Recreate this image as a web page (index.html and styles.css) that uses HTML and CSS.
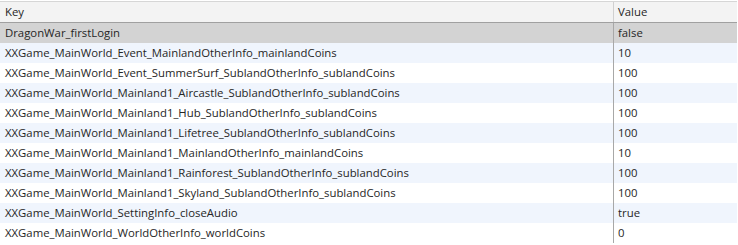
FILE: index.html
```html
<!DOCTYPE html>
<html>
<head>
<meta charset="utf-8">
<link rel="stylesheet" href="styles.css">
</head>
<body>
<div class="grid">
  <div class="row head"><div class="k">Key</div><div class="v">Value</div></div>
  <div class="row sel"><div class="k">DragonWar_firstLogin</div><div class="v">false</div></div>
  <div class="row alt"><div class="k">XXGame_MainWorld_Event_MainlandOtherInfo_mainlandCoins</div><div class="v">10</div></div>
  <div class="row"><div class="k">XXGame_MainWorld_Event_SummerSurf_SublandOtherInfo_sublandCoins</div><div class="v">100</div></div>
  <div class="row alt"><div class="k">XXGame_MainWorld_Mainland1_Aircastle_SublandOtherInfo_sublandCoins</div><div class="v">100</div></div>
  <div class="row"><div class="k">XXGame_MainWorld_Mainland1_Hub_SublandOtherInfo_sublandCoins</div><div class="v">100</div></div>
  <div class="row alt"><div class="k">XXGame_MainWorld_Mainland1_Lifetree_SublandOtherInfo_sublandCoins</div><div class="v">100</div></div>
  <div class="row"><div class="k">XXGame_MainWorld_Mainland1_MainlandOtherInfo_mainlandCoins</div><div class="v">10</div></div>
  <div class="row alt"><div class="k">XXGame_MainWorld_Mainland1_Rainforest_SublandOtherInfo_sublandCoins</div><div class="v">100</div></div>
  <div class="row"><div class="k">XXGame_MainWorld_Mainland1_Skyland_SublandOtherInfo_sublandCoins</div><div class="v">100</div></div>
  <div class="row alt"><div class="k">XXGame_MainWorld_SettingInfo_closeAudio</div><div class="v">true</div></div>
  <div class="row"><div class="k">XXGame_MainWorld_WorldOtherInfo_worldCoins</div><div class="v">0</div></div>
</div>
</body>
</html>
```
FILE: styles.css
```css
html, body {
  margin: 0;
  padding: 0;
  background: #ffffff;
}
.grid {
  width: 737px;
  margin-top: 1px;
  border-top: 1px solid #d6d6d6;
  font-family: "Open Sans", sans-serif;
  font-size: 11.35px;
  color: #262626;
}
.row {
  display: grid;
  grid-template-columns: 614px 1fr;
  height: 20px;
  line-height: 20px;
}
.row .k, .row .v {
  white-space: nowrap;
  overflow: hidden;
}
.row .k {
  padding-left: 5px;
  border-right: 1px solid #a8a8a8;
}
.row .v {
  padding-left: 4px;
}
.head {
  background: #f3f3f3;
  border-bottom: 1px solid #a0a0a0;
}
.head .k {
  border-right-color: #d0d0d0;
}
.sel {
  background: #d3d3d3;
}
.alt {
  background: #f0f5fd;
}
```
